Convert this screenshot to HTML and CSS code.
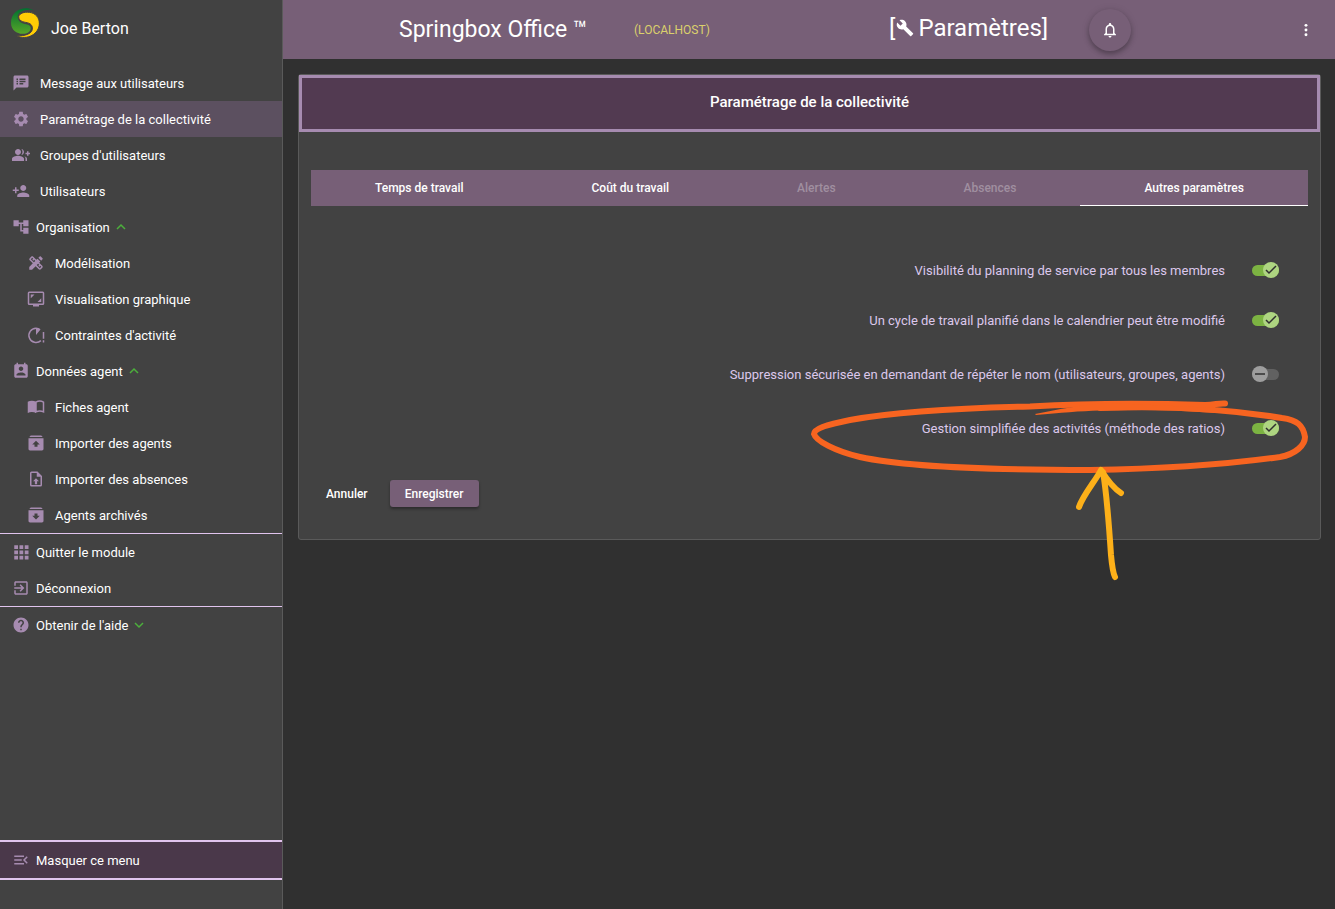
FILE: index.html
```html
<!DOCTYPE html>
<html lang="fr">
<head>
<meta charset="utf-8">
<meta name="viewport" content="width=device-width, initial-scale=1">
<title>Springbox Office – Paramètres</title>
<link rel="stylesheet" href="styles.css">
</head>
<body>
<div class="app">
  <aside class="sidebar">
    <div class="user">
      <svg class="logo" viewBox="33 24 84 90" aria-hidden="true">
        <defs>
          <linearGradient id="green" x1="0" y1="0" x2="0" y2="1"><stop offset="0" stop-color="#00702f"/><stop offset="1" stop-color="#57a629"/></linearGradient>
        </defs>
        <path fill="url(#green)" d="M100 31C75 16 33 30 33 69C33 92 54 104 74 101C89 99 96 86 90 78C84 71 74 73 64 68C50 61 49 44 62 36C72 30 88 28 100 31Z"/>
        <path fill="#ffcc05" stroke="#424242" stroke-width="3" d="M56 50C58 40 73 35 88 37C106 39 118 52 118 70C118 101 83 123 48 107C76 109 100 101 97 82C94 67 80 69 68 65C60 62 56 57 56 50Z"/>
      </svg>
      <span class="user-name">Joe Berton</span>
    </div>
    <nav class="menu">
      <a class="item wide" href="#"><svg viewBox="0 0 24 24"><path d="M20 2H4c-1.100 0-2 .9-2 2v18l4-4h14c1.100 0 2-.9 2-2V4c0-1.100-.9-2-2-2zM8 14H6v-2h2v2zm0-3H6V9h2v2zm0-3H6V6h2v2zm7 6h-5v-2h5v2zm3-3h-8V9h8v2zm0-3h-8V6h8v2z"/></svg>Message aux utilisateurs</a>
      <a class="item wide active" href="#"><svg viewBox="0 0 24 24"><path d="M19.140 12.940c.04-.3.060-.61.060-.94 0-.32-.02-.64-.07-.94l2.030-1.580c.18-.14.23-.41.120-.61l-1.920-3.320c-.12-.22-.37-.29-.59-.22l-2.390.96c-.5-.38-1.030-.7-1.620-.94l-.36-2.540c-.04-.24-.24-.41-.48-.41h-3.840c-.24 0-.43.17-.47.41l-.36 2.540c-.59.24-1.130.57-1.620.94l-2.390-.96c-.22-.08-.47 0-.59.22L2.740 8.870c-.12.21-.08.47.12.61l2.030 1.580c-.05.3-.09.63-.09.94s.02.64.07.94l-2.030 1.580c-.18.14-.23.41-.12.61l1.920 3.320c.12.22.37.29.59.22l2.390-.96c.5.38 1.030.7 1.620.94l.36 2.540c.05.24.24.41.48.41h3.840c.24 0 .44-.17.47-.41l.36-2.540c.59-.24 1.130-.56 1.620-.94l2.390.96c.22.08.47 0 .59-.22l1.920-3.320c.12-.22.07-.47-.12-.61l-2.010-1.580zM12 15.600c-1.980 0-3.600-1.620-3.600-3.600s1.620-3.600 3.600-3.600 3.600 1.620 3.600 3.600-1.620 3.600-3.600 3.600z"/></svg>Paramétrage de la collectivité</a>
      <a class="item wide" href="#"><svg viewBox="0 0 24 24"><path d="M22 9V7h-2v2h-2v2h2v2h2v-2h2V9zM8 12c2.210 0 4-1.790 4-4s-1.790-4-4-4-4 1.790-4 4 1.790 4 4 4zm0 1c-2.670 0-8 1.340-8 4v3h16v-3c0-2.660-5.330-4-8-4zM12.510 4.050C13.430 5.110 14 6.490 14 8s-.57 2.890-1.490 3.950C14.470 11.700 16 10.040 16 8s-1.530-3.700-3.490-3.950zM16.530 13.830C17.420 14.660 18 15.700 18 17v3h2v-3c0-1.450-1.590-2.510-3.470-3.170z"/></svg>Groupes d'utilisateurs</a>
      <a class="item wide" href="#"><svg viewBox="0 0 24 24"><path d="M15 12c2.210 0 4-1.790 4-4s-1.790-4-4-4-4 1.790-4 4 1.790 4 4 4zm-9-2V7H4v3H1v2h3v3h2v-3h3v-2H6zm9 4c-2.670 0-8 1.340-8 4v2h16v-2c0-2.660-5.330-4-8-4z"/></svg>Utilisateurs</a>
      <a class="item" href="#"><svg viewBox="0 0 24 24"><path d="M22 11V3h-7v3H9V3H2v8h7V8h2v10h4v3h7v-8h-7v3h-2V8h2v3z"/></svg>Organisation<svg class="chevron" viewBox="0 0 10 10"><path d="M1 7l4-4 4 4"/></svg></a>
      <a class="item sub" href="#"><svg viewBox="0 0 24 24"><path d="M16.240 11.510l1.570-1.570-3.750-3.750-1.570 1.570-4.140-4.130c-.78-.78-2.050-.78-2.830 0l-1.900 1.900c-.78.78-.78 2.050 0 2.830l4.130 4.130L3 17.250V21h3.750l4.760-4.760 4.130 4.130c.95.95 2.230.6 2.830 0l1.900-1.900c.78-.78.78-2.050 0-2.830l-4.130-4.130zm-7.060-.44L5.040 6.940l1.890-1.900L8.200 6.310 7.020 7.500l1.410 1.410 1.190-1.190 1.450 1.450-1.890 1.900zm7.880 7.890l-4.130-4.130 1.900-1.900 1.450 1.450-1.190 1.190 1.410 1.410 1.190-1.190 1.270 1.270-1.900 1.900zM20.710 7.040c.39-.39.39-1.020 0-1.410l-2.340-2.340c-.47-.47-1.120-.29-1.410 0l-1.830 1.830 3.750 3.750 1.830-1.830z"/></svg>Modélisation</a>
      <a class="item sub" href="#"><svg viewBox="0 0 24 24"><path class="line" d="M3 3h18c.6 0 1 .4 1 1v14c0 .6-.4 1-1 1H3c-.6 0-1-.4-1-1V4c0-.6.400-1 1-1z"/><path d="M5 6h5l-5 5zM19 16h-5l5-5zM8 20h8v2H8z"/></svg>Visualisation graphique</a>
      <a class="item sub" href="#"><svg viewBox="0 0 24 24"><path d="M12 2v10l6-7.500C16.500 3 14.500 2 12 2zM21 8h2v9h-2zM21 19h2v3h-2z"/><path class="line" d="M12 3a9.500 9.500 0 1 0 6.500 16.500"/></svg>Contraintes d'activité</a>
      <a class="item" href="#"><svg viewBox="0 0 24 24"><path d="M19 3h-1V1h-2v2H8V1H6v2H5c-1.110 0-2 .9-2 2v14c0 1.100.89 2 2 2h14c1.100 0 2-.9 2-2V5c0-1.100-.9-2-2-2zm-7 3c1.660 0 3 1.340 3 3s-1.340 3-3 3-3-1.340-3-3 1.340-3 3-3zm6 12H6v-1c0-2 4-3.100 6-3.100s6 1.100 6 3.100v1z"/></svg>Données agent<svg class="chevron" viewBox="0 0 10 10"><path d="M1 7l4-4 4 4"/></svg></a>
      <a class="item sub" href="#"><svg viewBox="0 0 24 24"><path d="M12 5C9 3 4 3 1 5v15c3-2 8-2 11 0z"/><path class="line" d="M12 5.500c3-1.800 7-1.800 10 0v13c-3-1.400-7-1.400-10 0z"/></svg>Fiches agent</a>
      <a class="item sub" href="#"><svg viewBox="0 0 24 24"><path d="M5 2h14l2 2H3zM2 5.500h20V20c0 1-.9 2-2 2H4c-1.100 0-2-1-2-2zM12 9l-5 5h3v3h4v-3h3z" fill-rule="evenodd"/></svg>Importer des agents</a>
      <a class="item sub" href="#"><svg viewBox="0 0 24 24"><path d="M14 2H6a2 2 0 0 0-2 2v16a2 2 0 0 0 2 2h12a2 2 0 0 0 2-2V8l-6-6zm4 18H6V4h7v5h5v11zM12 11l-4 4h2.500v4h3v-4H16z"/></svg>Importer des absences</a>
      <a class="item sub" href="#"><svg viewBox="0 0 24 24"><path d="M5 2h14l2 2H3zM2 5.500h20V20c0 1-.9 2-2 2H4c-1.100 0-2-1-2-2zM12 18l-5-5h3v-3h4v3h3z" fill-rule="evenodd"/></svg>Agents archivés</a>
      <div class="group">
        <a class="item" href="#"><svg viewBox="0 0 24 24"><path d="M3 3h5v5H3zM10 3h5v5h-5zM17 3h5v5h-5zM3 10h5v5H3zM10 10h5v5h-5zM17 10h5v5h-5zM3 17h5v5H3zM10 17h5v5h-5zM17 17h5v5h-5z"/></svg>Quitter le module</a>
        <a class="item" href="#"><svg viewBox="0 0 24 24"><path d="M10.090 15.590L11.500 17l5-5-5-5-1.410 1.410L12.670 11H3v2h9.670l-2.580 2.590zM19 3H5c-1.110 0-2 .9-2 2v4h2V5h14v14H5v-4H3v4c0 1.100.89 2 2 2h14c1.100 0 2-.9 2-2V5c0-1.100-.9-2-2-2z"/></svg>Déconnexion</a>
      </div>
      <a class="item" href="#"><svg viewBox="0 0 24 24"><path d="M12 2C6.480 2 2 6.480 2 12s4.480 10 10 10 10-4.480 10-10S17.520 2 12 2zm1 17h-2v-2h2v2zm2.070-7.750l-.9.920C13.450 12.900 13 13.500 13 15h-2v-.5c0-1.100.45-2.100 1.170-2.830l1.240-1.260c.37-.36.59-.86.59-1.410 0-1.100-.9-2-2-2s-2 .9-2 2H8c0-2.210 1.790-4 4-4s4 1.790 4 4c0 .88-.36 1.680-.93 2.250z"/></svg>Obtenir de l'aide<svg class="chevron" viewBox="0 0 10 10"><path d="M1 3l4 4 4-4"/></svg></a>
    </nav>
    <button class="item collapse" type="button"><svg viewBox="0 0 24 24"><path d="M3 18h13v-2H3v2zM3 13h10v-2H3v2zm0-7v2h13V6H3zm18 9.590L17.420 12 21 8.410 19.590 7l-5 5 5 5L21 15.590z"/></svg>Masquer ce menu</button>
  </aside>

  <div class="content">
    <header class="topbar">
      <span class="brand">Springbox Office ™</span>
      <span class="host">(LOCALHOST)</span>
      <h1 class="module">[<svg viewBox="0 0 24 24" aria-hidden="true"><path d="M22.700 19l-9.100-9.100c.9-2.300.4-5-1.500-6.900-2-2-5-2.400-7.400-1.300L9 6 6 9 1.600 4.700C.4 7.100.9 10.100 2.900 12.100c1.900 1.900 4.600 2.400 6.900 1.500l9.100 9.100c.4.4 1 .4 1.400 0l2.300-2.300c.5-.4.5-1.100.1-1.400z"/></svg>Paramètres]</h1>
      <button class="bell" type="button" aria-label="Notifications"><svg viewBox="0 0 24 24"><path d="M12 22c1.100 0 2-.9 2-2h-4c0 1.100.9 2 2 2zm6-6v-5c0-3.070-1.630-5.640-4.500-6.320V4c0-.83-.67-1.500-1.500-1.500s-1.500.67-1.500 1.500v.68C7.640 5.360 6 7.920 6 11v5l-2 2v1h16v-1l-2-2zm-2 1H8v-6c0-2.480 1.510-4.500 4-4.500s4 2.020 4 4.500v6z"/></svg></button>
      <button class="more" type="button" aria-label="Plus"><svg viewBox="0 0 24 24"><circle cx="12" cy="4" r="2.500"/><circle cx="12" cy="12" r="2.500"/><circle cx="12" cy="20" r="2.500"/></svg></button>
    </header>

    <main class="main">
      <section class="card">
        <h2 class="card-title">Paramétrage de la collectivité</h2>
        <div class="tabs" role="tablist">
          <button class="tab" type="button" role="tab">Temps de travail</button>
          <button class="tab" type="button" role="tab">Coût du travail</button>
          <button class="tab" type="button" role="tab" disabled>Alertes</button>
          <button class="tab" type="button" role="tab" disabled>Absences</button>
          <button class="tab selected" type="button" role="tab" aria-selected="true">Autres paramètres</button>
        </div>
        <form class="settings">
          <div class="row"><label for="s1">Visibilité du planning de service par tous les membres</label>
            <span class="switch"><input id="s1" type="checkbox" checked><svg class="thumb" viewBox="0 0 16 16"><path d="M3 8l3 3 7-7"/></svg></span></div>
          <div class="row"><label for="s2">Un cycle de travail planifié dans le calendrier peut être modifié</label>
            <span class="switch"><input id="s2" type="checkbox" checked><svg class="thumb" viewBox="0 0 16 16"><path d="M3 8l3 3 7-7"/></svg></span></div>
          <div class="row spaced"><label for="s3">Suppression sécurisée en demandant de répéter le nom (utilisateurs, groupes, agents)</label>
            <span class="switch"><input id="s3" type="checkbox"><svg class="thumb" viewBox="0 0 16 16"><path d="M3 8h10"/></svg></span></div>
          <div class="row"><label for="s4">Gestion simplifiée des activités (méthode des ratios)</label>
            <span class="switch"><input id="s4" type="checkbox" checked><svg class="thumb" viewBox="0 0 16 16"><path d="M3 8l3 3 7-7"/></svg></span></div>
          <div class="actions">
            <button class="btn" type="button">Annuler</button>
            <button class="btn primary" type="submit">Enregistrer</button>
          </div>
        </form>
        <svg class="marker" viewBox="805 395 510 190" aria-hidden="true">
          <path class="ring" d="M1225 403.500C1218 403 1215 405 1205 405C1150 403 1090 403 1030 406.500C960 408 900 411 850 420C825 425 814 429 814 434C816 441 835 451 860 457C910 468 1010 470 1090 470C1160 469 1230 464 1280 457C1296 454 1305 445 1305 437C1303 425 1297 420 1282 418C1240 411 1180 405 1100 408"/>
          <path class="tail" d="M1035 414C1060 409 1080 405 1110 403L1215 408L1215 413C1160 409 1130 410 1100 410.500C1080 411 1060 413 1036 415Z"/>
          <path class="arrow" d="M1079 507C1083 495 1096 480 1101 470C1106 478 1113 488 1121 493M1103 472C1107 495 1109 525 1111 555C1112 566 1113 573 1115 577"/>
        </svg>
      </section>
    </main>
  </div>
</div>
</body>
</html>
```

FILE: styles.css
```css
* { box-sizing: border-box; }

body {
  margin: 0;
  background: #303030;
  color: #fff;
  font-family: Roboto, "Liberation Sans", sans-serif;
  font-size: 13px;
}

button { font: inherit; color: inherit; border: 0; background: none; padding: 0; }
a { color: inherit; text-decoration: none; }

.app { display: flex; min-height: 100vh; }

.sidebar {
  display: flex;
  flex-direction: column;
  flex: 0 0 283px;
  background: #424242;
  border-right: 1px solid #5a5a5a;
  padding-bottom: 29px;
}

.user { display: flex; gap: 12px; height: 65px; padding: 8px 11px; }
.logo { width: 28px; height: 30px; }
.user-name { font-size: 16px; line-height: 42px; }

.item {
  display: flex;
  align-items: center;
  gap: 6px;
  width: 100%;
  height: 36px;
  padding-left: 12px;
  text-align: left;
}
.item svg { flex: none; width: 18px; height: 18px; fill: #a68bb0; }
.item .line { fill: none; stroke: #a68bb0; stroke-width: 2; }
.item .chevron { width: 10px; height: 10px; fill: none; stroke: #4caf3c; stroke-width: 1.500; }
.wide { gap: 10px; }
.sub { gap: 10px; padding-left: 27px; }
.active { background: #5c5060; }
.group { border-top: 1px solid #e1c4ee; border-bottom: 1px solid #e1c4ee; }
.collapse {
  height: 40px;
  margin-top: auto;
  background: #4a384a;
  border-top: 2px solid #e1c4ee;
  border-bottom: 2px solid #e1c4ee;
}

.content { flex: 1; min-width: 0; }

.topbar {
  display: grid;
  grid-template-columns: 235fr 255fr 200fr 207fr 20px;
  align-items: center;
  height: 59px;
  padding: 0 19px 0 116px;
  background: #775f77;
}
.brand { font-size: 23px; white-space: nowrap; }
.host { color: #dbd06c; font-size: 12px; }
.module {
  display: flex;
  align-items: center;
  margin: 0;
  padding-bottom: 4px;
  font-size: 24px;
  font-weight: 400;
  line-height: 30px;
}
.module svg { width: 18px; height: 18px; margin: 0 4px 0 1px; fill: #fff; }
.bell {
  display: grid;
  place-items: center;
  width: 42px;
  height: 42px;
  border-radius: 50%;
  background: #775f77;
  box-shadow: 0 3px 5px rgba(0, 0, 0, .25), 0 1px 8px rgba(0, 0, 0, .12);
}
.bell svg, .more svg { display: block; width: 18px; height: 18px; fill: #fff; }
.more svg { width: 14px; height: 14px; margin: auto; }

.main { padding: 15px 14px 15px 15px; }

.card {
  position: relative;
  background: #424242;
  border: 1px solid #5a5a5a;
  border-radius: 3px;
}
.card-title {
  margin: 0;
  padding: 14px 0 17px;
  border: 3px solid #a68bb0;
  background: #523a51;
  font-size: 15px;
  font-weight: 500;
  line-height: 20px;
  text-align: center;
}

.tabs { display: flex; margin: 38px 12px 0; background: #775f77; }
.tab {
  flex: 1 1 auto;
  height: 36px;
  border-bottom: 1px solid transparent;
  font-size: 12px;
  font-weight: 500;
}
.tab:disabled { color: #a08fa0; }
.tab.selected { border-bottom-color: #fff; }

.settings { padding: 39px 41px 32px 15px; }
.row {
  display: flex;
  align-items: center;
  justify-content: flex-end;
  gap: 27px;
  min-height: 50px;
  color: #dcc8ec;
  font-size: 13px;
}
.row.spaced { min-height: 58px; }

.switch { display: grid; align-items: center; width: 27px; height: 16px; }
.switch input, .thumb { grid-area: 1 / 1; }
.switch input {
  appearance: none;
  width: 27px;
  height: 11px;
  margin: 0;
  border-radius: 6px;
  background: #616161;
}
.switch input:checked { background: #7cb342; }
.thumb {
  width: 16px;
  height: 16px;
  border-radius: 50%;
  background: #9e9e9e;
  fill: none;
  stroke: #303030;
  stroke-width: 1.500;
  pointer-events: none;
}
input:checked + .thumb { justify-self: end; background: #aed581; }

.actions { display: flex; gap: 10px; padding-top: 27px; }
.btn {
  height: 27px;
  padding: 0 12px;
  border-radius: 3px;
  font-size: 12px;
  font-weight: 500;
}
.primary { min-width: 89px; background: #775f77; box-shadow: 0 2px 3px rgba(0, 0, 0, .35); }

.marker {
  position: absolute;
  top: 320px;
  right: 5px;
  width: 510px;
  height: 190px;
  overflow: visible;
  pointer-events: none;
}
.ring { fill: none; stroke: #f76420; stroke-width: 6; stroke-linecap: round; }
.tail { fill: #f76420; }
.arrow { fill: none; stroke: #fdb019; stroke-width: 6; stroke-linecap: round; stroke-linejoin: round; }
```
